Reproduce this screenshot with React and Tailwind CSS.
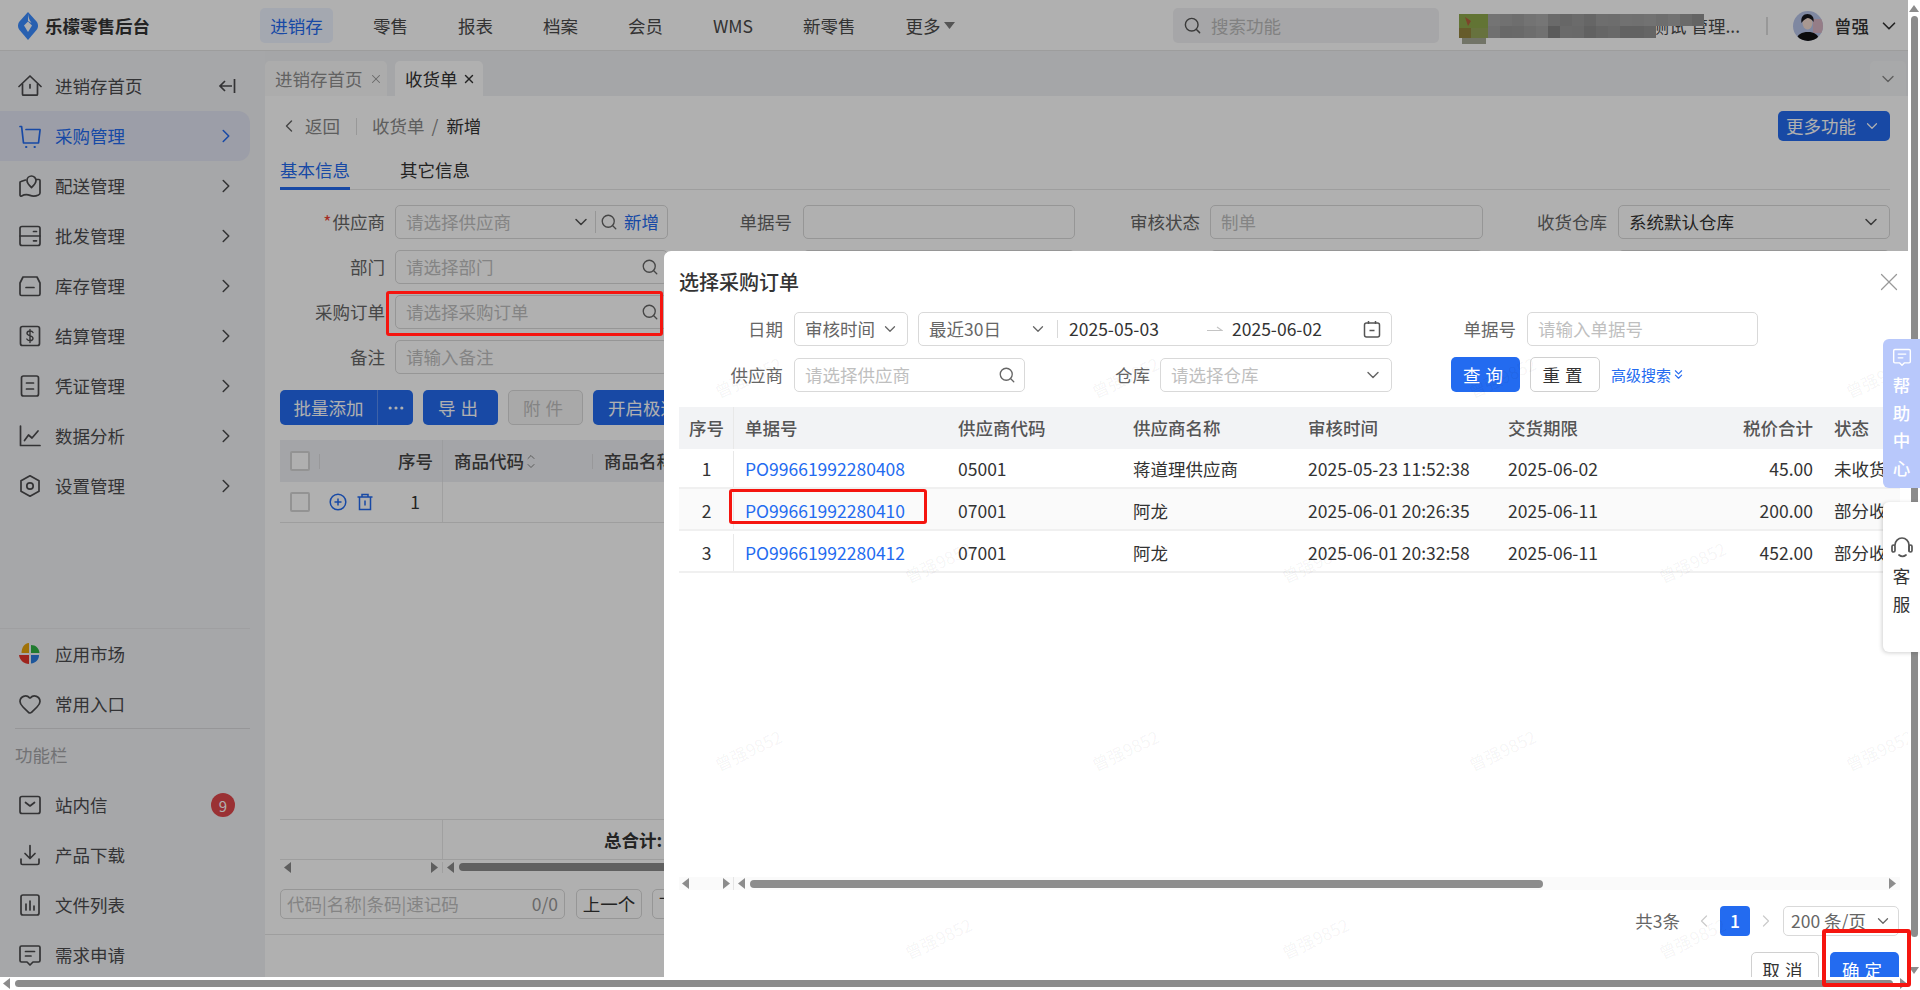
import { ChevronDown, ChevronLeft, ChevronRight, ChevronUp, ChevronsDown, Ellipsis, Heart, Search, X } from "lucide-react";

const navItems = ["零售", "报表", "档案", "会员", "WMS", "新零售"];

const svgProps = {
  width: 24,
  height: 24,
  viewBox: "0 0 24 24",
  fill: "none",
  stroke: "currentColor",
  strokeWidth: 1.7,
  strokeLinecap: "round",
  strokeLinejoin: "round",
};

function HomeIcon() {
  return (
    <svg {...svgProps}>
      <path d="M1 12.5 12 2l11 10.5" />
      <path d="M4.5 10v10.2a1 1 0 0 0 1 1h13a1 1 0 0 0 1-1V10" />
      <path d="M12 10.5v3.5" />
    </svg>
  );
}
function CartIcon() {
  return (
    <svg {...svgProps}>
      <path d="M2 2.5h1.6L5.5 19h15L22 6.5" />
      <path d="M8 5.5h14" />
      <path d="M8 23h.4M16.5 23h.4" strokeWidth="2" />
    </svg>
  );
}
function MapIcon() {
  return (
    <svg {...svgProps}>
      <path d="M7.5 6 3 7.5A1 1 0 0 0 2 8.5v12.5c0 1 .8 1.4 1.6 1 3.5-2 6-1.6 8.4-.6s5 1.2 8.4-.4c.8-.4 1.6-1 1.6-2V6.5a1 1 0 0 0-1-1h-2.5" />
      <path d="M13.5 13.5c3-2.7 4.5-5 4.5-7a4.5 4.5 0 0 0-9 0c0 2 1.5 4.3 4.5 7Z" />
    </svg>
  );
}
function WholesaleIcon() {
  return (
    <svg {...svgProps}>
      <rect x="2" y="2.5" width="20" height="19" rx="2" />
      <path d="M2 12h20M15.5 7.5h3M15.5 16.8h3" />
    </svg>
  );
}
function StockIcon() {
  return (
    <svg {...svgProps}>
      <path d="M5 3h14l3 6v11a1.5 1.5 0 0 1-1.5 1.5h-17A1.5 1.5 0 0 1 2 20V9Z" />
      <path d="M8 13.5h8" />
    </svg>
  );
}
function SettleIcon() {
  return (
    <svg {...svgProps}>
      <rect x="2.5" y="2.5" width="19" height="19" rx="2" />
      <path d="M15 8.5c-.5-1-1.5-1.5-3-1.5-1.7 0-3 .8-3 2.3 0 3.2 6 1.9 6 5 0 1.6-1.4 2.4-3 2.4-1.5 0-2.6-.6-3.2-1.7M12 5.500v13" strokeWidth="1.4" />
    </svg>
  );
}
function VoucherIcon() {
  return (
    <svg {...svgProps}>
      <rect x="3.5" y="2" width="17" height="20" rx="2" />
      <path d="M8.500 9h7M8.500 15h7" />
    </svg>
  );
}
function ChartIcon() {
  return (
    <svg {...svgProps}>
      <path d="M2.500 2v19.500H22" />
      <path d="M6.500 16.500 10.500 11l3.500 3 6-7" />
    </svg>
  );
}
function SettingIcon() {
  return (
    <svg {...svgProps}>
      <path d="M12 1.800 21 6.800v10.400l-9 5-9-5V6.800Z" />
      <circle cx="12" cy="12" r="3.200" />
    </svg>
  );
}
function MarketIcon() {
  return (
    <svg width="24" height="24" viewBox="0 0 24 24">
      <path d="M11 11H3.500C3.500 6 6 1.500 11 1Z" fill="#e8a50c" />
      <path d="M13 11V3c5 0 8 3.500 8.500 8Z" fill="#2fb344" />
      <path d="M11 13v9C6 22 1.500 18 1 13Z" fill="#e5352b" />
      <path d="M13 13h8c0 4.500-3 8-8 8.500Z" fill="#2a7de1" />
    </svg>
  );
}
function MailIcon() {
  return (
    <svg {...svgProps}>
      <rect x="2" y="3.500" width="20" height="17" rx="2" />
      <path d="m7.500 9.500 4.500 3.500 4.500-3.500" />
    </svg>
  );
}
function DownloadIcon() {
  return (
    <svg {...svgProps}>
      <path d="M12 2.500v12.500M7 10.500l5 5 5-5" />
      <path d="M3 16v4a1.500 1.500 0 0 0 1.500 1.500h15A1.500 1.500 0 0 0 21 20v-4" />
    </svg>
  );
}
function FilesIcon() {
  return (
    <svg {...svgProps}>
      <rect x="3" y="2" width="18" height="20" rx="2" />
      <path d="M8 11v6M12 8v9M16 13v4" />
    </svg>
  );
}
function BubbleIcon({ size = 24 }) {
  return (
    <svg {...svgProps} width={size} height={size}>
      <path d="M3.500 3h17A1.500 1.500 0 0 1 22 4.500v13a1.500 1.500 0 0 1-1.500 1.500H15l-3 3-3-3H3.500A1.500 1.500 0 0 1 2 17.500v-13A1.500 1.500 0 0 1 3.500 3Z" />
      <path d="M7.500 8.500h9M7.500 13h5.500" />
    </svg>
  );
}
function Logo() {
  return (
    <svg width="20" height="28" viewBox="0 0 20 28">
      <path d="M10 0 L1.500 9.500 C-.5 12 -.5 15.500 1.500 18 L10 28 L18.500 18 C20.500 15.500 20.500 12 18.500 9.500Z" fill="#3a8bff" />
      <path d="M10 1.500 C10.300 5 11 7.500 13.500 11 L10 9 Z" fill="#fff" />
      <path d="M10 9.500 L14 13.500 L10 20 L6 13.500Z" fill="#fff" />
    </svg>
  );
}
function Arrow({ dir = "left", className = "" }) {
  return (
    <svg width="7" height="11" viewBox="0 0 7 11" className={className}>
      <path d={dir === "left" ? "M7 0v11L0 5.500Z" : "M0 0v11l7-5.500Z"} fill="currentColor" />
    </svg>
  );
}

function NavRow({ icon, label, active, badge, chevron = true, short }) {
  return (
    <div
      className={`flex ${short ? "h-[49px]" : "h-[50px]"} w-[250px] shrink-0 items-center rounded-r-[12px] pl-[18px] ${
        active ? "bg-[#e2e5f3] text-[#236bf0]" : "text-[#4b4b4d]"
      }`}
    >
      <span className="flex w-[37px] shrink-0">{icon}</span>
      <span className="flex-1">{label}</span>
      {chevron && <ChevronRight size={22} strokeWidth={1.7} className="mr-[13px]" />}
      {badge && (
        <span className="mr-[15px] flex h-[24px] w-[24px] items-center justify-center rounded-full bg-[#e0474c] text-[15px] text-white">
          {badge}
        </span>
      )}
    </div>
  );
}

function Sidebar() {
  return (
    <aside className="flex h-full w-[265px] shrink-0 flex-col overflow-hidden bg-[#f1f2f5] pt-[10px]">
      <div className="flex h-[50px] w-[250px] shrink-0 items-center pl-[18px] text-[#4b4b4d]">
        <span className="flex w-[37px] shrink-0"><HomeIcon /></span>
        <span className="flex-1">进销存首页</span>
        <svg width="18" height="16" viewBox="0 0 18 16" fill="none" stroke="currentColor" strokeWidth="1.7" className="mr-[14px]">
          <path d="M16.500 1v14M14 8H2M7 3 2 8l5 5" />
        </svg>
      </div>
      <NavRow icon={<CartIcon />} label="采购管理" active />
      <NavRow icon={<MapIcon />} label="配送管理" />
      <NavRow icon={<WholesaleIcon />} label="批发管理" />
      <NavRow icon={<StockIcon />} label="库存管理" />
      <NavRow icon={<SettleIcon />} label="结算管理" />
      <NavRow icon={<VoucherIcon />} label="凭证管理" />
      <NavRow icon={<ChartIcon />} label="数据分析" />
      <NavRow icon={<SettingIcon />} label="设置管理" />
      <div className="mt-[117px] h-px w-[250px] shrink-0 bg-[#e6e7ea]" />
      <NavRow icon={<MarketIcon />} label="应用市场" chevron={false} />
      <NavRow icon={<Heart size={24} strokeWidth={1.7} />} label="常用入口" chevron={false} short />
      <div className="ml-[15px] h-px w-[235px] shrink-0 bg-[#d9dadd]" />
      <div className="flex h-[51px] shrink-0 items-center pl-[15px] text-[#a5a6a9]">功能栏</div>
      <NavRow icon={<MailIcon />} label="站内信" chevron={false} badge="9" />
      <NavRow icon={<DownloadIcon />} label="产品下载" chevron={false} />
      <NavRow icon={<FilesIcon />} label="文件列表" chevron={false} />
      <NavRow icon={<BubbleIcon />} label="需求申请" chevron={false} />
    </aside>
  );
}

function Mosaic() {
  const top = ["#a9a9a9", "#a4a4a4", "#a0a0a0", "#a7a7a7", "#ababab", "#9a9a9a", "#969696", "#9c9c9c", "#949494", "#a0a0a0", "#9e9e9e", "#a4a4a4", "#a2a2a2", "#a6a6a6", "#a0a0a0", "#a6a6a6", "#9a9a9a", "#929292"];
  const bottom = ["#a2a2a2", "#979797", "#999999", "#9f9f9f", "#a4a4a4", "#858585", "#9a9a9a", "#999999", "#8d8d8d", "#949494", "#999999", "#8f8f8f", "#8e8e8e", "#939393"];
  return (
    <svg width="260" height="34" viewBox="0 0 260 34" className="absolute left-0 top-[11px]">
      <rect x="0" y="2" width="29" height="14" fill="#8fa84c" />
      <rect x="0" y="16" width="12" height="10" fill="#94843f" />
      <rect x="12" y="16" width="17" height="10" fill="#95a55b" />
      <rect x="3" y="26" width="24" height="6" fill="#a6a896" />
      <path d="M6 5l6 4-3 5z" fill="#b5613d" />
      {top.map((c, i) => (
        <rect key={i} x={29 + i * 12} y="2" width="12" height="12" fill={c} />
      ))}
      {bottom.map((c, i) => (
        <rect key={i} x={29 + i * 12} y="14" width="12" height="12" fill={c} />
      ))}
    </svg>
  );
}

function Avatar() {
  return (
    <svg width="30" height="30" viewBox="0 0 30 30" className="shrink-0">
      <clipPath id="av"><circle cx="15" cy="15" r="15" /></clipPath>
      <g clipPath="url(#av)">
        <rect width="30" height="30" fill="#b9c5ea" />
        <rect x="20" y="8" width="10" height="14" fill="#d8b6c4" />
        <path d="M3 30c1-7 6-9 12-9s10 2 12 9Z" fill="#111" />
        <ellipse cx="14.500" cy="12" rx="5" ry="6.500" fill="#f4ddd2" />
        <path d="M8.500 12c-1-6 2-9 6-9s7 3 6 8c-2-3-4-4-6-4-2 1-4 2-6 5Z" fill="#17161c" />
      </g>
    </svg>
  );
}

function Header() {
  return (
    <header className="flex h-[49px] shrink-0 items-center bg-white">
      <div className="flex w-[260px] shrink-0 items-center pl-[18px]">
        <Logo />
        <span className="ml-[7px] text-[17.500px] font-bold text-[#333]">乐檬零售后台</span>
      </div>
      <div className="flex w-[913px] shrink-0 items-center text-[#4a4a4a]">
        <span className="flex h-[35px] w-[73px] shrink-0 items-center justify-center rounded-[5px] bg-[#eef3ff] text-[#236bf0]">进销存</span>
        <div className="ml-[15px] flex items-center">
          {navItems.map((n) => (
            <span key={n} className="px-[25px]">{n}</span>
          ))}
          <span className="flex items-center pl-[25px]">
            更多
            <svg width="11" height="7" viewBox="0 0 11 7" className="ml-[3px]"><path d="M0 0h11L5.500 7Z" fill="#7b7b7b" /></svg>
          </span>
        </div>
      </div>
      <div className="flex h-[35px] w-[266px] shrink-0 items-center rounded-[5px] bg-[#f1f1f3] pl-[10px] text-[#bbb]">
        <Search size={19} strokeWidth={1.8} className="mr-[9px] text-[#555]" />
        搜索功能
      </div>
      <div className="relative ml-[20px] flex h-[49px] w-[281px] shrink-0 items-center justify-end text-[#4a4a4a]">
        <span>测试 管理...</span>
        <Mosaic />
      </div>
      <div className="ml-[26px] h-[18px] w-[2px] shrink-0 bg-[#ddd]" />
      <div className="ml-[25px]"><Avatar /></div>
      <span className="ml-[11px] font-medium text-[#333]">曾强</span>
      <ChevronDown size={22} strokeWidth={1.8} className="ml-[9px] text-[#333]" />
    </header>
  );
}

function TabBar() {
  return (
    <div className="flex h-[45px] shrink-0 items-end bg-[#f0f1f3]">
      <div className="flex h-[35px] w-[122px] items-center rounded-t-[5px] bg-[#fafafa] pl-[10px] text-[#8e8e8e]">
        进销存首页
        <X size={14} strokeWidth={1.8} className="ml-[6px] text-[#999]" />
      </div>
      <div className="ml-[8px] flex h-[35px] w-[88px] items-center rounded-t-[5px] bg-white pl-[10px] text-[#333]">
        收货单
        <X size={14} strokeWidth={2.4} className="ml-[4px]" />
      </div>
      <div className="ml-auto mr-[2px] flex h-[35px] w-[36px] items-center justify-center rounded-t-[5px] bg-[#f4f5f6] text-[#888]">
        <ChevronDown size={20} strokeWidth={1.6} />
      </div>
    </div>
  );
}

function Field({ labelW, gap, w, label, star, placeholder, value, right }) {
  return (
    <>
      <span className={`${labelW} flex shrink-0 items-center justify-end text-[#666]`}>
        {star && <span className="mr-px text-[#f04134]">*</span>}
        {label}
      </span>
      <div className={`${gap} ${w} flex h-[34px] shrink-0 items-center justify-between rounded-[5px] border border-[#d9d9d9] pl-[10px] pr-[8px] ${value ? "text-[#333]" : "text-[#bfbfbf]"}`}>
        <span className="whitespace-nowrap">{value || placeholder}</span>
        {right}
      </div>
    </>
  );
}

function FormArea() {
  const mag = <Search size={18} strokeWidth={1.8} className="text-[#666]" />;
  return (
    <div className="mt-[15px] flex flex-col gap-[11px]">
      <div className="flex">
        <Field labelW="w-[105px]" gap="ml-[10px]" w="w-[273px]" label="供应商" star placeholder="请选择供应商"
          right={
            <span className="flex items-center">
              <ChevronDown size={20} strokeWidth={1.8} className="text-[#555]" />
              <span className="mx-[4px] h-[22px] w-px bg-[#d9d9d9]" />
              {mag}
              <span className="ml-[6px] text-[#236bf0]">新增</span>
            </span>
          }
        />
        <Field labelW="w-[124px]" gap="ml-[11px]" w="w-[272px]" label="单据号" />
        <Field labelW="w-[125px]" gap="ml-[10px]" w="w-[273px]" label="审核状态" placeholder="制单" />
        <Field labelW="w-[124px]" gap="ml-[11px]" w="w-[272px]" label="收货仓库" value="系统默认仓库"
          right={<ChevronDown size={20} strokeWidth={1.8} className="text-[#555]" />}
        />
      </div>
      <div className="flex">
        <Field labelW="w-[105px]" gap="ml-[10px]" w="w-[273px]" label="部门" placeholder="请选择部门" right={mag} />
        <Field labelW="w-[124px]" gap="ml-[11px]" w="w-[272px]" label="" />
        <Field labelW="w-[125px]" gap="ml-[10px]" w="w-[273px]" label="" />
        <Field labelW="w-[124px]" gap="ml-[11px]" w="w-[272px]" label="" />
      </div>
      <div className="flex">
        <Field labelW="w-[105px]" gap="ml-[10px]" w="w-[273px]" label="采购订单" placeholder="请选择采购订单" right={mag} />
      </div>
      <div className="flex">
        <Field labelW="w-[105px]" gap="ml-[10px]" w="w-[273px]" label="备注" placeholder="请输入备注" />
      </div>
    </div>
  );
}

function Checkbox() {
  return <span className="block h-[20px] w-[20px] shrink-0 rounded-[2px] border-2 border-[#d5d5d5] bg-white" />;
}

function GoodsTable() {
  return (
    <div className="mt-[15px] flex w-[1610px] flex-col">
      <div className="flex h-[42px] bg-[#eef0f3] font-medium text-[#444]">
        <div className="flex w-[163px] shrink-0 items-center border-r border-[#e3e4e7] pl-[10px]">
          <Checkbox />
          <span className="ml-[9px] h-[15px] w-px bg-[#dcdde0]" />
          <span className="ml-auto pr-[9px]">序号</span>
        </div>
        <div className="flex w-[150px] shrink-0 items-center pl-[11px]">
          商品代码
          <span className="ml-[1px] flex flex-col text-[#777]">
            <ChevronUp size={12} strokeWidth={1.8} className="-mb-[3px]" />
            <ChevronDown size={12} strokeWidth={1.8} />
          </span>
          <span className="ml-auto h-[15px] w-px bg-[#dcdde0]" />
        </div>
        <div className="flex items-center pl-[11px]">商品名称</div>
      </div>
      <div className="flex h-[41px] border-b border-[#e5e5e5] text-[#333]">
        <div className="flex w-[163px] shrink-0 items-center border-r border-[#e8e8e8] pl-[10px]">
          <Checkbox />
          <svg width="18" height="18" viewBox="0 0 18 18" fill="none" stroke="#236bf0" strokeWidth="1.5" className="ml-[19px]">
            <circle cx="9" cy="9" r="7.800" />
            <path d="M9 5.500v7M5.500 9h7" />
          </svg>
          <svg width="18" height="18" viewBox="0 0 18 18" fill="none" stroke="#236bf0" strokeWidth="1.5" className="ml-[9px]">
            <path d="M1.500 4h15M6 4V1.500h6V4M3.500 4v12.500h11V4M9 7.500v5" />
          </svg>
          <span className="ml-auto pr-[22px]">1</span>
        </div>
      </div>
      <div className="h-[296px] w-[163px] border-r border-transparent" />
      <div className="flex h-[41px] border-y border-[#e5e5e5]">
        <div className="w-[163px] shrink-0 border-r border-[#e8e8e8]" />
        <div className="flex flex-1 items-center pl-[161px] font-bold text-[#333]">总合计:</div>
      </div>
      <div className="flex h-[14px] items-center text-[#888]">
        <div className="flex w-[163px] shrink-0 items-center justify-between border-r border-[#e8e8e8] px-[4px]">
          <Arrow dir="left" />
          <Arrow dir="right" />
        </div>
        <Arrow dir="left" className="ml-[4px]" />
        <div className="ml-[5px] h-[8px] w-[1000px] rounded-full bg-[#8c8c8c]" />
      </div>
    </div>
  );
}

function PageContent() {
  return (
    <main className="flex min-w-0 flex-1 flex-col overflow-hidden bg-white">
      <TabBar />
      <div className="flex flex-1 flex-col pl-[15px] pr-[18px] pt-[15px]">
        <div className="flex h-[30px] shrink-0 items-center">
          <ChevronLeft size={20} strokeWidth={1.7} className="ml-[-1px] text-[#666]" />
          <span className="ml-[6px] text-[#888]">返回</span>
          <span className="ml-[16px] h-[17px] w-px bg-[#ddd]" />
          <span className="ml-[15px] text-[#888]">收货单</span>
          <span className="ml-[7px] text-[#888]">/</span>
          <span className="ml-[8px] text-[#333]">新增</span>
          <div className="ml-auto flex h-[30px] w-[112px] items-center rounded-[5px] bg-[#236bf0] pl-[8px] text-white">
            更多功能
            <ChevronDown size={18} strokeWidth={1.6} className="ml-[7px]" />
          </div>
        </div>
        <div className="mt-[12px] flex h-[37px] shrink-0 items-center border-b border-[#e5e5e5]">
          <div className="flex h-[37px] w-[70px] items-center justify-center border-b-[3px] border-[#236bf0] text-[#236bf0]">基本信息</div>
          <span className="ml-[50px] pb-[2px] text-[#333]">其它信息</span>
        </div>
        <FormArea />
        <div className="mt-[16px] flex h-[35px] shrink-0">
          <div className="flex w-[133px] rounded-[5px] bg-[#236bf0] text-white">
            <span className="flex w-[98px] shrink-0 items-center justify-center border-r border-[#5a8ff4]">批量添加</span>
            <span className="flex flex-1 items-center justify-center"><Ellipsis size={20} strokeWidth={1.8} /></span>
          </div>
          <div className="ml-[10px] flex w-[75px] items-center justify-center rounded-[5px] bg-[#236bf0] tracking-[5px] text-white">导出</div>
          <div className="ml-[10px] flex w-[75px] items-center justify-center rounded-[5px] border border-[#d9d9d9] bg-[#f5f5f5] tracking-[5px] text-[#bfbfbf]">附件</div>
          <div className="ml-[10px] flex w-[180px] items-center rounded-[5px] bg-[#236bf0] pl-[15px] text-white">开启极速模式</div>
        </div>
        <GoodsTable />
        <div className="mt-[15px] flex h-[30px] shrink-0">
          <div className="flex w-[285px] items-center justify-between rounded-[5px] border border-[#d9d9d9] px-[6px] text-[#bfbfbf]">
            <span>代码|名称|条码|速记码</span>
            <span className="text-[#999]">0/0</span>
          </div>
          <div className="ml-[11px] flex w-[66px] items-center justify-center rounded-[5px] border border-[#d9d9d9] text-[#333]">上一个</div>
          <div className="ml-[10px] flex w-[66px] items-center justify-center rounded-[5px] border border-[#d9d9d9] text-[#333]">下一个</div>
        </div>
        <div className="-ml-[15px] mt-[15px] h-px shrink-0 bg-[#e5e5e5]" />
      </div>
    </main>
  );
}

function Watermarks({ spots, ox, oy, className }) {
  return spots.map(([x, y]) => (
    <span
      key={`${x}-${y}`}
      className={`pointer-events-none absolute -translate-x-1/2 -translate-y-1/2 -rotate-[25deg] whitespace-nowrap text-[17px] ${className}`}
      style={{ left: x - ox, top: y - oy }}
    >
      曾强9852
    </span>
  ));
}

const modalMarks = [
  [748, 377], [1125, 377], [1502, 377], [1879, 377],
  [938, 562], [1315, 562], [1692, 562],
  [748, 750], [1125, 750], [1502, 750], [1879, 750],
  [938, 938], [1315, 938], [1692, 938],
];
const pageMarks = [
  [371, 190], [748, 190], [1125, 190],
  [371, 560], [560, 750],
  [938, 190], [1315, 190], [1692, 190],
  [560, 380], [180, 560],
];

const orderCols = "grid-cols-[55px_212px_175px_175px_200px_184px_144px_76px]";
const orders = [
  { no: 1, code: "PO99661992280408", sup: "05001", name: "蒋道理供应商", time: "2025-05-23 11:52:38", due: "2025-06-02", sum: "45.00", st: "未收货", h: "h-[40px] pt-[2px]" },
  { no: 2, code: "PO99661992280410", sup: "07001", name: "阿龙", time: "2025-06-01 20:26:35", due: "2025-06-11", sum: "200.00", st: "部分收货", h: "h-[42px] pt-[3px] bg-[#fafafa]" },
  { no: 3, code: "PO99661992280412", sup: "07001", name: "阿龙", time: "2025-06-01 20:32:58", due: "2025-06-11", sum: "452.00", st: "部分收货", h: "h-[42px] pt-[3px]" },
];

function OrderTable() {
  return (
    <div className="ml-[15px] mt-[15px] w-[1221px] text-[#333]">
      <div className={`grid h-[42px] items-center bg-[#f2f3f5] font-medium text-[#555] ${orderCols}`}>
        <span className="flex h-full items-center justify-center border-r border-[#e8e8e8] pl-px">序号</span>
        <span className="pl-[11px]">单据号</span>
        <span className="pl-[12px]">供应商代码</span>
        <span className="pl-[12px]">供应商名称</span>
        <span className="pl-[12px]">审核时间</span>
        <span className="pl-[12px]">交货期限</span>
        <span className="pr-[11px] text-right">税价合计</span>
        <span className="pl-[10px]">状态</span>
      </div>
      {orders.map((o) => (
        <div key={o.no} className={`grid items-center border-b-2 border-[#f0f0f0] ${o.h} ${orderCols}`}>
          <span className="flex h-full items-center justify-center border-r border-[#e8e8e8] pl-px">{o.no}</span>
          <span className="pl-[11px] text-[#236bf0]">{o.code}</span>
          <span className="pl-[12px]">{o.sup}</span>
          <span className="pl-[12px]">{o.name}</span>
          <span className="pl-[12px]">{o.time}</span>
          <span className="pl-[12px]">{o.due}</span>
          <span className="pr-[11px] text-right">{o.sum}</span>
          <span className="overflow-hidden whitespace-nowrap pl-[10px]">{o.st}</span>
        </div>
      ))}
    </div>
  );
}

function Modal() {
  const box = "flex shrink-0 items-center rounded-[5px] border border-[#d9d9d9]";
  return (
    <div className="absolute bottom-0 left-[664px] right-0 top-[251px] flex flex-col overflow-hidden rounded-tl-[7px] bg-white">
      <div className="flex h-[61px] shrink-0 items-center justify-between pl-[15px] pr-[4px] text-[20px] font-medium text-[#333]">
        选择采购订单
        <X size={30} strokeWidth={1} className="text-[#999]" />
      </div>
      <div className="flex h-[34px] shrink-0 items-center text-[#333]">
        <span className="w-[119px] text-right text-[#666]">日期</span>
        <div className={`${box} ml-[11px] h-[34px] w-[114px] justify-between pl-[10px] pr-[8px] text-[#666]`}>
          审核时间
          <ChevronDown size={18} strokeWidth={1.7} />
        </div>
        <div className={`${box} ml-[10px] h-[34px] w-[474px]`}>
          <span className="flex w-[139px] items-center justify-between border-r border-[#d9d9d9] pl-[10px] pr-[10px] text-[#666]">
            最近30日
            <ChevronDown size={18} strokeWidth={1.7} />
          </span>
          <span className="ml-[11px] w-[138px]">2025-05-03</span>
          <svg width="16" height="8" viewBox="0 0 16 8" fill="none" stroke="#c4c4c4" strokeWidth="1.200"><path d="M0 5.500h15L10 2" /></svg>
          <span className="ml-[9px] flex-1">2025-06-02</span>
          <svg width="18" height="19" viewBox="0 0 18 19" fill="none" stroke="#555" strokeWidth="1.500" className="mr-[10px]">
            <rect x="1.500" y="3" width="15" height="14" rx="2" />
            <path d="M5.500 1v3M12.500 1v3M6.500 10.500h5" />
          </svg>
        </div>
        <span className="w-[124px] text-right text-[#666]">单据号</span>
        <div className={`${box} ml-[11px] h-[34px] w-[231px] pl-[10px] text-[#bfbfbf]`}>请输入单据号</div>
      </div>
      <div className="mt-[11px] flex h-[35px] shrink-0 items-center">
        <span className="w-[119px] text-right text-[#666]">供应商</span>
        <div className={`${box} ml-[11px] h-[34px] w-[231px] justify-between pl-[10px] pr-[8px] text-[#bfbfbf]`}>
          请选择供应商
          <Search size={18} strokeWidth={1.8} className="text-[#666]" />
        </div>
        <span className="w-[125px] text-right text-[#666]">仓库</span>
        <div className={`${box} ml-[10px] h-[34px] w-[232px] justify-between pl-[10px] pr-[8px] text-[#bfbfbf]`}>
          请选择仓库
          <ChevronDown size={20} strokeWidth={1.7} className="text-[#666]" />
        </div>
        <div className="ml-[59px] flex h-[35px] w-[69px] shrink-0 items-center justify-center rounded-[5px] bg-[#236bf0] tracking-[5px] text-white">查询</div>
        <div className="ml-[10px] flex h-[35px] w-[70px] shrink-0 items-center justify-center rounded-[5px] border border-[#d0d0d0] tracking-[5px] text-[#333]">重置</div>
        <span className="ml-[11px] flex items-center text-[15px] text-[#236bf0]">
          高级搜索
          <ChevronsDown size={15} strokeWidth={1.8} />
        </span>
      </div>
      <OrderTable />
      <div className="ml-[15px] mt-[304px] flex h-[13px] w-[1221px] shrink-0 items-center bg-[#fafafa] text-[#8c8c8c]">
        <div className="flex h-full w-[55px] shrink-0 items-center justify-between border-r border-[#e5e5e5] pl-[3px] pr-[3px]">
          <Arrow dir="left" />
          <Arrow dir="right" />
        </div>
        <Arrow dir="left" className="ml-[4px]" />
        <div className="ml-[5px] h-[8px] w-[793px] rounded-full bg-[#8c8c8c]" />
        <Arrow dir="right" className="ml-auto mr-[4px]" />
      </div>
      <div className="mt-[16px] flex h-[30px] shrink-0 items-center justify-end pr-[9px] text-[#666]">
        <span>共3条</span>
        <ChevronLeft size={20} strokeWidth={1.5} className="ml-[14px] text-[#ccc]" />
        <span className="ml-[6px] flex h-[30px] w-[30px] items-center justify-center rounded-[4px] bg-[#236bf0] font-medium text-white">1</span>
        <ChevronRight size={20} strokeWidth={1.5} className="ml-[6px] text-[#ccc]" />
        <div className="ml-[7px] flex h-[30px] w-[116px] items-center justify-between rounded-[5px] border border-[#d9d9d9] pl-[7px] pr-[6px]">
          200 条/页
          <ChevronDown size={18} strokeWidth={1.7} />
        </div>
      </div>
      <div className="mt-[16px] flex shrink-0 justify-end pr-[9px]">
        <div className="flex h-[36px] w-[68px] items-center justify-center rounded-[5px] border border-[#d0d0d0] tracking-[5px] text-[#333]">取消</div>
        <div className="ml-[11px] flex h-[36px] w-[69px] items-center justify-center rounded-[5px] bg-[#236bf0] tracking-[5px] text-white">确定</div>
      </div>
      <Watermarks spots={modalMarks} ox={664} oy={251} className="text-black/[.05]" />
    </div>
  );
}

function FloatWidgets() {
  return (
    <div className="absolute right-0 top-[339px] flex w-[37px] flex-col">
      <div className="flex h-[149px] flex-col items-center rounded-l-[6px] bg-[#b8c8fb] pt-[8px] text-[17.500px] font-medium leading-[27.500px] text-white">
        <BubbleIcon size={20} />
        <span className="mt-[4px]">帮</span>
        <span>助</span>
        <span>中</span>
        <span>心</span>
      </div>
      <div className="mt-[14px] flex h-[150px] flex-col items-center rounded-l-[6px] bg-white pt-[33px] text-[17.500px] leading-[27.500px] text-[#333] shadow-[-1px_1px_4px_rgba(0,0,0,.18)]">
        <svg width="24" height="26" viewBox="0 0 24 26" fill="none" stroke="#555" strokeWidth="1.700" strokeLinecap="round">
          <path d="M5 10a7 7 0 0 1 14 0v6" />
          <rect x="2" y="10" width="3" height="7" rx="1.500" />
          <rect x="19" y="10" width="3" height="7" rx="1.500" />
          <path d="M9 20c2 1.500 5 1.500 7 0" />
        </svg>
        <span className="mt-[1px]">客</span>
        <span>服</span>
      </div>
    </div>
  );
}

export default function App() {
  return (
    <div className="relative h-[990px] w-[1920px] overflow-hidden bg-white text-[17.500px] leading-none font-['Noto_Sans_CJK_SC','Noto_Sans',sans-serif]">
      <div className="flex h-[977px]">
        <div className="relative flex w-[1908px] shrink-0 flex-col overflow-hidden pt-px">
          <Header />
          <div className="flex min-h-0 flex-1 border-t border-[#e4e4e4]">
            <Sidebar />
            <PageContent />
          </div>
          <Watermarks spots={pageMarks} ox={0} oy={0} className="text-black/[.02]" />
          <div className="absolute inset-0 bg-black/[.31]" />
          <Modal />
        </div>
        <div className="flex w-[12px] shrink-0 flex-col items-center text-[#8c8c8c]">
          <svg width="10" height="7" viewBox="0 0 10 7" className="mt-[5px]"><path d="M5 0l5 7H0Z" fill="currentColor" /></svg>
          <div className="mt-[4px] h-[921px] w-[7px] rounded-full bg-[#8c8c8c]" />
          <svg width="10" height="7" viewBox="0 0 10 7" className="mt-[30px]"><path d="M5 7 10 0H0Z" fill="currentColor" /></svg>
        </div>
      </div>
      <div className="flex h-[13px] items-center pl-[3px] text-[#8c8c8c]">
        <Arrow dir="left" />
        <div className="ml-[5px] h-[7px] w-[1878px] rounded-full bg-[#8c8c8c]" />
        <Arrow dir="right" className="ml-[7px]" />
      </div>
      <FloatWidgets />
      <div className="absolute left-[386px] top-[291px] h-[45px] w-[277px] rounded-[3px] border-[3px] border-[#f5150f]" />
      <div className="absolute left-[729px] top-[489px] h-[35px] w-[198px] rounded-[3px] border-[3px] border-[#f5150f]" />
      <div className="absolute left-[1822px] top-[929px] h-[58px] w-[89px] rounded-[3px] border-[4px] border-[#f5150f]" />
    </div>
  );
}
